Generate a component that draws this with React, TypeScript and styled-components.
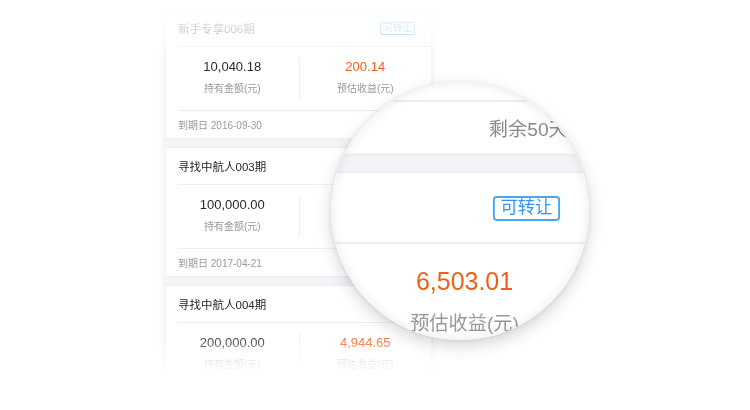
import React from 'react';
import styled, { createGlobalStyle } from 'styled-components';

const GlobalStyle = createGlobalStyle`
  html, body { margin: 0; padding: 0; background: #fff; }
  body { font-family: "Liberation Sans", "Noto Sans CJK SC", sans-serif; }
`;

type Item = {
  title: string;
  transferable: boolean;
  held: string;
  income: string;
  due: string;
  left: string;
};

const items: Item[] = [
  { title: '新手专享006期', transferable: true, held: '10,040.18', income: '200.14', due: '2016-09-30', left: '剩余50天' },
  { title: '寻找中航人003期', transferable: true, held: '100,000.00', income: '6,503.01', due: '2017-04-21', left: '剩余253天' },
  { title: '寻找中航人004期', transferable: false, held: '200,000.00', income: '4,944.65', due: '2017-05-19', left: '剩余281天' },
];

const Page = styled.div`
  position: relative;
  width: 750px;
  height: 410px;
  overflow: hidden;
  background: #fff;
`;

const Stage = styled.div`
  box-sizing: border-box;
  height: 100%;
  padding: 10px 0 0 166px;
  -webkit-mask-image: linear-gradient(to bottom, rgba(0,0,0,0.05) 0px, rgba(0,0,0,0.14) 18px, rgba(0,0,0,0.22) 30px, rgba(0,0,0,0.6) 46px, #000 60px, #000 330px, rgba(0,0,0,0.8) 342px, rgba(0,0,0,0.14) 365px, rgba(0,0,0,0.04) 385px, rgba(0,0,0,0) 400px);
  mask-image: linear-gradient(to bottom, rgba(0,0,0,0.05) 0px, rgba(0,0,0,0.14) 18px, rgba(0,0,0,0.22) 30px, rgba(0,0,0,0.6) 46px, #000 60px, #000 330px, rgba(0,0,0,0.8) 342px, rgba(0,0,0,0.14) 365px, rgba(0,0,0,0.04) 385px, rgba(0,0,0,0) 400px);
`;

const Card = styled.div`
  width: 265px;
  height: 376px;
  overflow: hidden;
  background: #fff;
  box-shadow: 0 0 8px rgba(0, 0, 0, 0.1);
`;

const LensCard = styled.div`
  width: 265px;
  background: #fff;
`;

const Block = styled.div`
  display: flex;
  flex-direction: column;
`;

const Header = styled.div`
  box-sizing: border-box;
  height: 37px;
  margin-left: 12px;
  padding-right: 16px;
  display: flex;
  align-items: center;
  justify-content: space-between;
  border-bottom: 1px solid #efeff1;
`;

const Title = styled.span`
  font-size: 11.5px;
  color: #262626;
`;

const Badge = styled.span`
  box-sizing: border-box;
  height: 13px;
  padding: 0 3px;
  display: flex;
  align-items: center;
  border: 1px solid #4aa6f3;
  border-radius: 2px;
  color: #2f95ee;
  font-size: 9px;
  line-height: 1;
`;

const Amounts = styled.div`
  box-sizing: border-box;
  height: 63px;
  padding: 10px 0;
  display: grid;
  grid-template-columns: 1fr 1fr;
`;

const Col = styled.div<{ $divided?: boolean }>`
  display: flex;
  flex-direction: column;
  align-items: center;
  border-left: ${(p) => (p.$divided ? '1px solid #efeff1' : 'none')};
`;

const Value = styled.span<{ $accent?: boolean }>`
  margin-top: 2px;
  font-size: 13px;
  line-height: 16px;
  color: ${(p) => (p.$accent ? '#f15f16' : '#2b2b2b')};
`;

const Caption = styled.span`
  margin-top: 7px;
  font-size: 10px;
  line-height: 14px;
  color: #999;
`;

const Rule = styled.div`
  height: 1px;
  margin-left: 12px;
  background: #efeff1;
`;

const DateRow = styled.div`
  height: 27px;
  margin-left: 12px;
  padding-right: 12px;
  display: flex;
  align-items: center;
  justify-content: space-between;
  font-size: 10px;
  color: #999;
`;

const Remain = styled.span`
  color: #888;
`;

const Band = styled.div`
  box-sizing: border-box;
  height: 10px;
  background: #f4f4f8;
  border-top: 1px solid #ededf1;
  border-bottom: 1px solid #ededf1;
`;

const Magnifier = styled.div`
  position: absolute;
  left: 331px;
  top: 82px;
  width: 258px;
  height: 258px;
  border-radius: 50%;
  overflow: hidden;
  background: #fff;
  box-shadow: 0 6px 16px rgba(0, 0, 0, 0.17), 0 0 4px rgba(0, 0, 0, 0.08);
  &::after {
    content: '';
    position: absolute;
    inset: 0;
    border-radius: 50%;
    box-shadow: inset 0 0 12px rgba(0, 0, 0, 0.09);
    pointer-events: none;
  }
`;

const Lens = styled.div`
  position: absolute;
  left: -249px;
  top: -174px;
  transform: scale(1.92);
  transform-origin: 0 0;
`;

const ListContent: React.FC = () => (
  <>
    {items.map((it, i) => (
      <Block key={i}>
        <Header>
          <Title>{it.title}</Title>
          {it.transferable && <Badge>可转让</Badge>}
        </Header>
        <Amounts>
          <Col>
            <Value>{it.held}</Value>
            <Caption>持有金额(元)</Caption>
          </Col>
          <Col $divided>
            <Value $accent>{it.income}</Value>
            <Caption>预估收益(元)</Caption>
          </Col>
        </Amounts>
        <Rule />
        <DateRow>
          <span>到期日 {it.due}</span>
          <Remain>{it.left}</Remain>
        </DateRow>
        <Band />
      </Block>
    ))}
  </>
);

export default function App() {
  return (
    <Page>
      <GlobalStyle />
      <Stage>
        <Card>
          <ListContent />
        </Card>
      </Stage>
      <Magnifier>
        <Lens>
          <LensCard>
            <ListContent />
          </LensCard>
        </Lens>
      </Magnifier>
    </Page>
  );
}
